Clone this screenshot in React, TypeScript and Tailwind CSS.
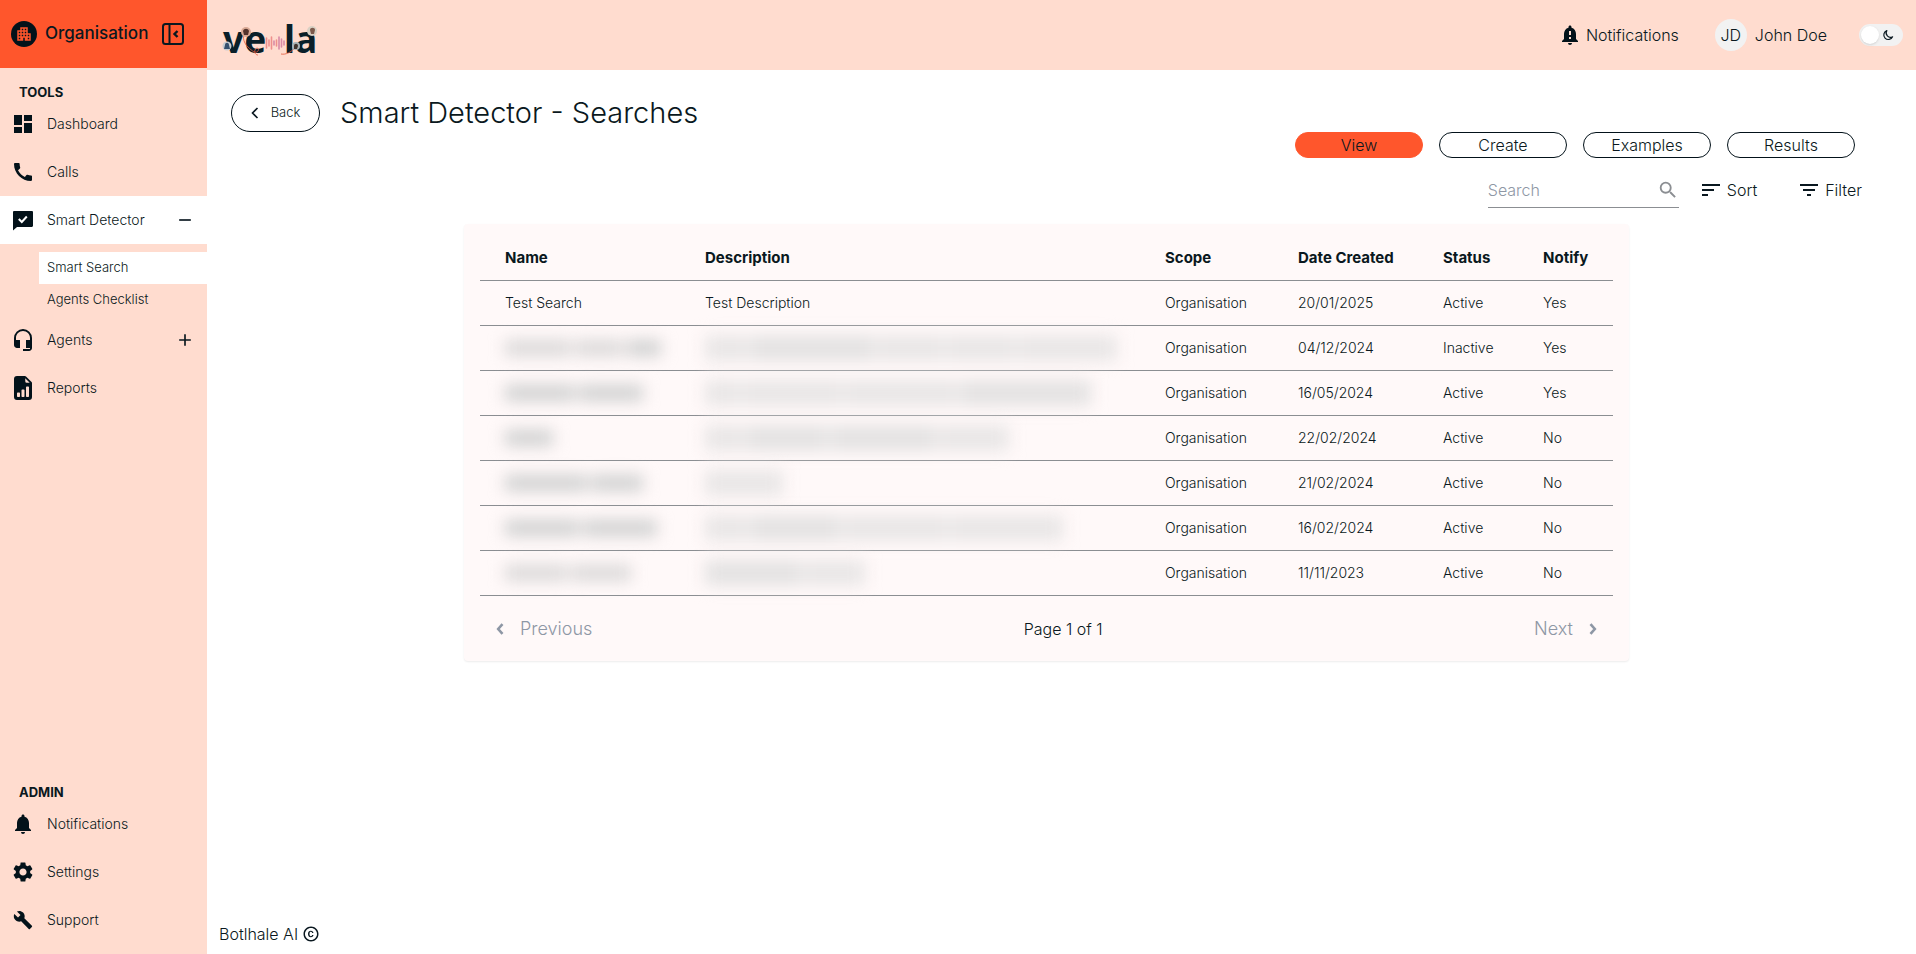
import type { ReactNode } from "react";
import {
  MdAdd,
  MdApartment,
  MdBuild,
  MdCall,
  MdCopyright,
  MdDashboard,
  MdFilterList,
  MdHeadsetMic,
  MdNotificationImportant,
  MdNotifications,
  MdRemove,
  MdSearch,
  MdSettings,
  MdSort,
} from "react-icons/md";
import { BsFileEarmarkBarGraphFill } from "react-icons/bs";

function CollapseIcon() {
  return (
    <svg width="24" height="24" viewBox="0 0 24 24" fill="none" stroke="currentColor" strokeWidth="2" aria-hidden="true">
      <rect x="2" y="2" width="20" height="20" rx="2.5" />
      <path d="M8.5 2v20" />
      <path d="M16.5 9l-3 3 3 3" strokeWidth="2.4" />
    </svg>
  );
}

function ChatCheckIcon() {
  return (
    <svg width="24" height="24" viewBox="0 0 24 24" aria-hidden="true">
      <path d="M3.2 3h17.6c.7 0 1.2.5 1.2 1.2v13.6c0 .7-.5 1.2-1.2 1.2H6l-4 3.500V4.200C2 3.500 2.500 3 3.200 3z" fill="currentColor" />
      <path d="M7.800 11l3 3 5-5.500" fill="none" stroke="#fff" strokeWidth="2" />
    </svg>
  );
}

function MoonIcon() {
  return (
    <svg width="12" height="12" viewBox="0 0 12 12" fill="none" stroke="currentColor" strokeWidth="1.200" strokeLinejoin="round" aria-hidden="true">
      <path d="M4.800 1.600A4.600 4.600 0 1 0 10.600 7.800 4.400 4.400 0 0 1 4.800 1.600z" />
    </svg>
  );
}

function Chevron({ direction }: { direction: "left" | "right" }) {
  return (
    <svg width="8" height="12" viewBox="0 0 8 12" fill="none" stroke="currentColor" strokeWidth="2.600" aria-hidden="true">
      <path d={direction === "left" ? "M6.500 1.200L2.200 6l4.300 4.800" : "M1.500 1.200L5.800 6l-4.300 4.800"} />
    </svg>
  );
}

function VelaLogo() {
  return (
    <svg width="100" height="58" viewBox="0 -13 100 58" role="img" aria-label="vela">
      <g fill="#0a1f29" fontFamily="'Noto Sans', 'Open Sans', sans-serif" fontWeight="700" fontSize="37">
        <text x="2" y="34">ve</text>
        <text x="63" y="34">la</text>
      </g>
      <g stroke="#ee8f8c" strokeWidth="1.600" strokeLinecap="round">
        <path d="M45.500 19v10M48 21v6M50.500 18v12M55.500 21v6" />
        <path d="M53 22v4M58 18v12M60.500 20v8M63 22v4" stroke="#d98aa6" />
      </g>
      <path d="M24 13c-3 6-1 11 3 15s8 7 10 4-2-4-3-1 1 5 3 5" fill="none" stroke="#e2573a" strokeWidth=".8" />
      <path d="M60 35c5 1 10-2 14-6" fill="none" stroke="#e2573a" strokeWidth=".8" />
      <circle cx="25" cy="13" r="5" fill="#d9a995" />
      <path d="M22 12c1-3 5-3 6 0l-1 4h-4z" fill="#54332c" />
      <circle cx="6" cy="27" r="4.500" fill="#c9ccd0" />
      <path d="M4 26c0-3 4-3 4 0l1 4H3z" fill="#35506e" />
      <circle cx="91" cy="12" r="5" fill="#d9d0c4" />
      <path d="M89 11c0-3 5-3 5 0l-1 4h-3z" fill="#7c5a4c" />
      <circle cx="75" cy="27" r="4" fill="#a9b3b6" />
      <path d="M73 27c0-3 4-3 4 0l-1 3h-3z" fill="#42352f" />
    </svg>
  );
}

function SidebarItem({ icon, label, active, trailing }: { icon: ReactNode; label: string; active?: boolean; trailing?: ReactNode }) {
  return (
    <a href="#" className={`flex h-12 items-center gap-3 pr-3 pl-[11px] text-sm font-light ${active ? "bg-white" : ""}`}>
      <span className="text-2xl text-[#03121a]">{icon}</span>
      <span className="grow">{label}</span>
      {trailing && <span className="text-xl">{trailing}</span>}
    </a>
  );
}

type Word = [width: number, strong?: boolean];

interface SearchRow {
  name: string | Word[];
  description: string | Word[];
  date: string;
  status: string;
  notify: string;
}

const rows: SearchRow[] = [
  { name: "Test Search", description: "Test Description", date: "20/01/2025", status: "Active", notify: "Yes" },
  { name: [[66], [48], [34, true]], description: [[42], [122, true], [66], [68], [98]], date: "04/12/2024", status: "Inactive", notify: "Yes" },
  { name: [[70, true], [64, true]], description: [[34], [98], [112], [130, true]], date: "16/05/2024", status: "Active", notify: "Yes" },
  { name: [[48, true]], description: [[38], [80, true], [104, true], [70]], date: "22/02/2024", status: "Active", notify: "No" },
  { name: [[82, true], [52, true]], description: [[78]], date: "21/02/2024", status: "Active", notify: "No" },
  { name: [[74, true], [74, true]], description: [[42], [88, true], [104], [112]], date: "16/02/2024", status: "Active", notify: "No" },
  { name: [[62], [60]], description: [[96, true], [60]], date: "11/11/2023", status: "Active", notify: "No" },
];

function Redacted({ words, soft }: { words: Word[]; soft?: boolean }) {
  return (
    <div className="flex" aria-hidden="true">
      <div className={`flex items-center gap-1 blur-[8px] ${soft ? "h-7 bg-[#f5f1f1]" : "h-5"}`}>
        {words.map(([width, strong], i) => (
          <span
            key={i}
            className={`shrink-0 ${soft ? (strong ? "h-6 bg-[#e4e2e2]" : "h-6 bg-[#e9e6e6]") : strong ? "h-4 bg-[#cfd0d0]" : "h-4 bg-[#dad8d8]"}`}
            style={{ width }}
          />
        ))}
      </div>
    </div>
  );
}

const tabs = ["View", "Create", "Examples", "Results"];
const columns = ["Name", "Description", "Scope", "Date Created", "Status", "Notify"];

export default function App() {
  return (
    <div className="flex min-h-screen bg-white font-['Inter','Liberation_Sans',sans-serif] text-[#0a1820]">
      <aside className="flex w-[207px] shrink-0 flex-col bg-[#ffdccf]">
        <div className="flex h-[68px] items-center bg-[#ff562c] pl-[11px]">
          <span className="flex size-[26px] items-center justify-center rounded-full bg-[#03121a] text-lg text-[#ff562c]">
            <MdApartment />
          </span>
          <span className="ml-2 grow text-[17px] font-medium">Organisation</span>
          <button type="button" aria-label="Collapse sidebar" className="mr-[22px]">
            <CollapseIcon />
          </button>
        </div>
        <nav aria-label="Tools" className="pt-4">
          <h2 className="pl-[19px] text-[13px] leading-4 font-bold">TOOLS</h2>
          <SidebarItem icon={<MdDashboard />} label="Dashboard" />
          <SidebarItem icon={<MdCall />} label="Calls" />
          <SidebarItem icon={<ChatCheckIcon />} label="Smart Detector" active trailing={<MdRemove />} />
          <div className="flex flex-col pt-2 pl-[39px] text-[13px] font-light">
            <a href="#" className="flex h-8 items-center bg-white pl-2">Smart Search</a>
            <a href="#" className="flex h-8 items-center pl-2">Agents Checklist</a>
          </div>
          <SidebarItem icon={<MdHeadsetMic />} label="Agents" trailing={<MdAdd />} />
          <SidebarItem icon={<BsFileEarmarkBarGraphFill />} label="Reports" />
        </nav>
        <nav aria-label="Admin" className="mt-auto pb-[10px]">
          <h2 className="pl-[19px] text-[13px] leading-4 font-bold">ADMIN</h2>
          <SidebarItem icon={<MdNotifications />} label="Notifications" />
          <SidebarItem icon={<MdSettings />} label="Settings" />
          <SidebarItem icon={<MdBuild className="p-0.5" />} label="Support" />
        </nav>
      </aside>

      <div className="flex min-w-0 grow flex-col">
        <header className="flex h-[70px] items-center bg-[#ffdccf] pr-[13px] pl-[14px] font-light">
          <VelaLogo />
          <a href="#" className="ml-auto flex items-center gap-1">
            <MdNotificationImportant className="text-2xl text-[#03121a]" />
            Notifications
          </a>
          <a href="#" className="ml-9 flex items-center gap-2">
            <span className="flex size-8 items-center justify-center rounded-full bg-[#f2f2f2]">JD</span>
            John Doe
          </a>
          <button type="button" role="switch" aria-checked="false" aria-label="Dark mode" className="ml-8 flex h-[22px] w-11 items-center justify-between rounded-full bg-[#f2f2f2] pr-[9px] pl-0.5">
            <span className="size-[18px] rounded-full bg-white shadow" />
            <MoonIcon />
          </button>
        </header>

        <main className="flex grow flex-col pt-6 pr-[54px] pl-6">
          <div className="flex items-center gap-5">
            <button type="button" className="flex h-[38px] w-[89px] items-center justify-center gap-3 rounded-full border border-[#03121a] text-[13px] font-light">
              <svg width="8" height="12" viewBox="0 0 8 12" fill="none" stroke="currentColor" strokeWidth="1.600" aria-hidden="true">
                <path d="M6.500 1l-5 5 5 5" />
              </svg>
              Back
            </button>
            <h1 className="text-[29px] leading-9 font-light">Smart Detector - Searches</h1>
          </div>

          <div className="flex justify-end gap-4 pr-[7px] font-light">
            {tabs.map((tab, i) => (
              <button
                key={tab}
                type="button"
                className={`flex h-[26px] w-32 items-center justify-center rounded-full border ${i === 0 ? "border-[#ff562c] bg-[#ff562c]" : "border-[#03121a]"}`}
              >
                {tab}
              </button>
            ))}
          </div>

          <div className="flex h-[66px] items-start justify-end font-light">
            <label className="flex h-[50px] w-[191px] items-center border-b border-[#8b8e92] pt-3.5">
              <input type="text" placeholder="Search" aria-label="Search" className="w-0 grow bg-transparent outline-none placeholder:text-[#8e97a5]" />
              <MdSearch className="shrink-0 text-[22px] text-[#8b8e92]" />
            </label>
            <button type="button" className="mt-5 ml-5 flex items-center gap-1">
              <MdSort className="text-2xl" />
              Sort
            </button>
            <button type="button" className="mt-5 ml-10 flex items-center gap-1">
              <MdFilterList className="text-2xl" />
              Filter
            </button>
          </div>

          <section className="w-5/7 self-center rounded-sm bg-[#fff9f9] px-4 pt-3 shadow-[0_1px_2px_rgba(0,0,0,0.08)]">
            <table className="w-full table-fixed text-left text-sm">
              <colgroup>
                <col className="w-[200px]" />
                <col />
                <col className="w-[133px]" />
                <col className="w-[145px]" />
                <col className="w-[100px]" />
                <col className="w-[95px]" />
              </colgroup>
              <thead className="text-[15px]">
                <tr className="h-11 border-b border-[#8b8e92]">
                  {columns.map((column) => (
                    <th key={column} scope="col" className="pl-[25px] font-bold whitespace-nowrap">{column}</th>
                  ))}
                </tr>
              </thead>
              <tbody className="font-light">
                {rows.map((row) => (
                  <tr key={row.date} className="h-[45px] border-b border-[#8b8e92]">
                    <td className="pl-[25px]">{typeof row.name === "string" ? row.name : <Redacted words={row.name} />}</td>
                    <td className="pl-[25px]">{typeof row.description === "string" ? row.description : <Redacted words={row.description} soft />}</td>
                    <td className="pl-[25px]">Organisation</td>
                    <td className="pl-[25px]">{row.date}</td>
                    <td className="pl-[25px]">{row.status}</td>
                    <td className="pl-[25px]">{row.notify}</td>
                  </tr>
                ))}
              </tbody>
            </table>
            <div className="flex h-[65px] items-center justify-between px-4 pt-0.5 font-light">
              <button type="button" disabled className="flex items-center gap-4 text-lg text-[#8e97a5]">
                <Chevron direction="left" />
                Previous
              </button>
              <span>Page 1 of 1</span>
              <button type="button" disabled className="flex items-center gap-4 text-lg text-[#8e97a5]">
                Next
                <Chevron direction="right" />
              </button>
            </div>
          </section>
        </main>

        <footer className="flex items-center gap-1 px-3 pb-2 font-light">
          Botlhale AI
          <MdCopyright className="text-lg" />
        </footer>
      </div>
    </div>
  );
}
